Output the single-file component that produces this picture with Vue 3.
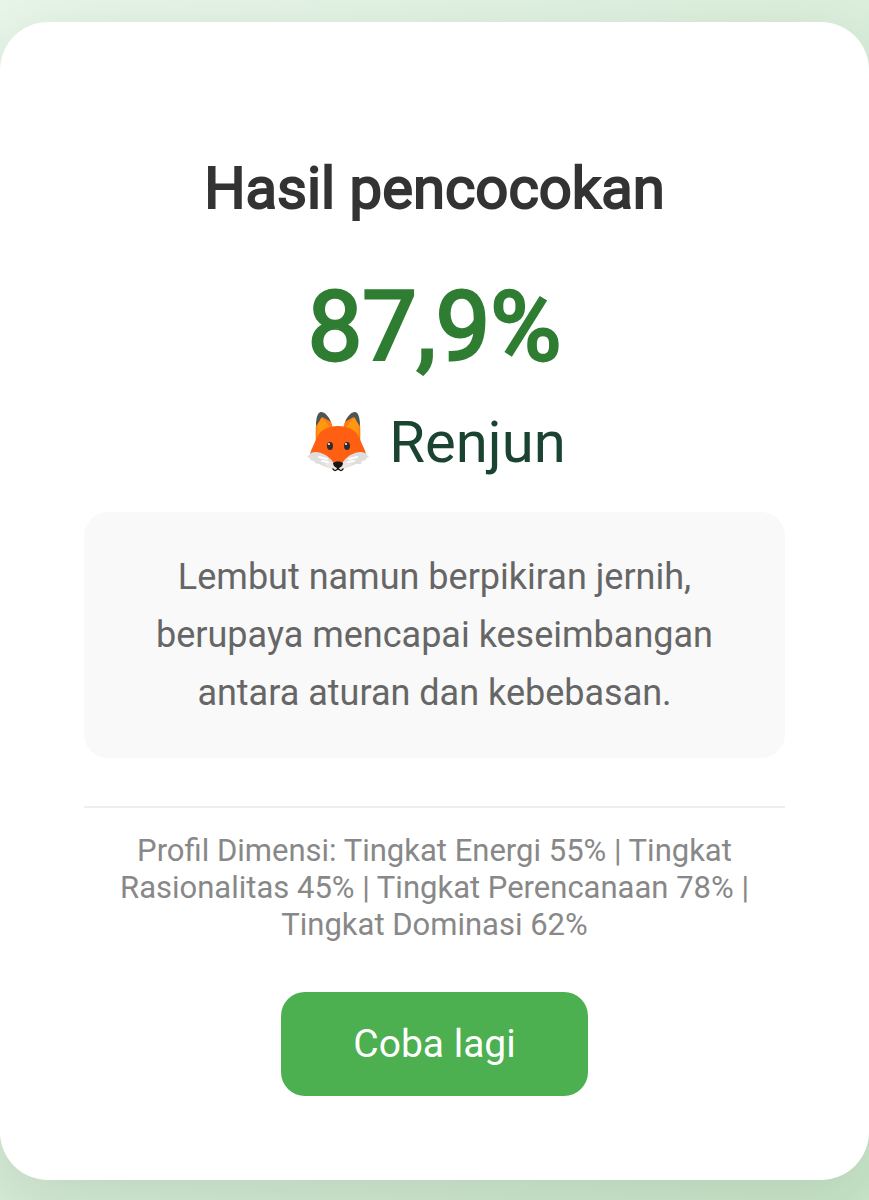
<script setup>
import { ref } from 'vue'

const result = ref({
  score: '87,9%',
  name: 'Renjun',
  description: 'Lembut namun berpikiran jernih, berupaya mencapai keseimbangan antara aturan dan kebebasan.',
})

const dimensions = [
  { label: 'Tingkat Energi', value: 55 },
  { label: 'Tingkat Rasionalitas', value: 45 },
  { label: 'Tingkat Perencanaan', value: 78 },
  { label: 'Tingkat Dominasi', value: 62 },
]

const profile = dimensions.map((d) => `${d.label} ${d.value}%`).join(' | ')
</script>

<template>
  <main class="page">
    <section class="card">
      <h1 class="title">Hasil pencocokan</h1>
      <p class="score">{{ result.score }}</p>
      <p class="name">
        <svg class="fox" viewBox="-3 0 72 62" role="img" aria-label="Rubah">
          <path d="M10 30C9 19 10 4 15 2C20 1 26 10 27 18L22 28Z" fill="#ff7a12" />
          <path d="M54 30C55 19 54 4 49 2C44 1 38 10 37 18L42 28Z" fill="#ff7a12" />
          <path d="M11 27C11 16 12 8 15 6C19 9 24 15 25 19L14 27Z" fill="#ff9710" />
          <path d="M53 27C53 16 52 8 49 6C45 9 40 15 39 19L50 27Z" fill="#ff9710" />
          <path d="M10 15C10 6 12 1 15 1C19 1 23 6 25 11C22 9 19 7 16 6C14 8 13 12 10 15Z" fill="#4c5557" />
          <path d="M54 15C54 6 52 1 49 1C45 1 41 6 39 11C42 9 45 7 48 6C50 8 51 12 54 15Z" fill="#4c5557" />
          <path d="M32 15C21 15 13 20 10 28C8 34 5 38 4 43L22 50L32 55L42 50L60 43C59 38 56 34 54 28C51 20 43 15 32 15Z" fill="#ff5f12" />
          <path d="M1 46L5 42C12 39 22 44 27 51L32 53L37 51C42 44 52 39 59 42L63 46L60 47L60 49L56 50L55 53L50 53C45 55 40 57 36 58L28 58C22 57 17 55 13 53L9 52L8 50L4 49L4 47Z" fill="#dedede" />
          <path d="M18 53C24 49 26 50 30 55L32 56L34 55C38 50 40 49 46 53C42 56 38 57 35 58L29 58C25 57 21 56 18 53Z" fill="#eee6df" />
          <path d="M13 46L21 48M16 50L22 51M51 46L43 48M48 50L42 51" fill="none" stroke="#fff" stroke-width="2" stroke-linecap="round" />
          <ellipse cx="24" cy="35" rx="3" ry="4" fill="#2e2c2c" />
          <ellipse cx="41" cy="35" rx="3" ry="4" fill="#2e2c2c" />
          <circle cx="23" cy="33" r="1" fill="#fff" />
          <circle cx="40" cy="33" r="1" fill="#fff" />
          <path d="M27 52C29 50 35 50 37 52C37 55 34 57 32 57C30 57 27 55 27 52Z" fill="#171615" />
          <path d="M27 58C28 60 31 60 32 57C33 60 36 60 37 58" fill="none" stroke="#171615" stroke-width="1.5" stroke-linecap="round" />
        </svg>
        <span>{{ result.name }}</span>
      </p>
      <p class="description">{{ result.description }}</p>
      <p class="profile">Profil Dimensi: {{ profile }}</p>
      <button class="retry" type="button">Coba lagi</button>
    </section>
  </main>
</template>

<style>
body {
  margin: 0;
}
</style>

<style scoped>
.page {
  box-sizing: border-box;
  min-height: 100vh;
  display: flex;
  flex-direction: column;
  justify-content: center;
  padding: 22px 0 20px;
  overflow: hidden;
  background: linear-gradient(135deg, #e8f5e9, #c8e6c9);
  font-family: Roboto, "Liberation Sans", sans-serif;
  text-align: center;
}

.card {
  display: flex;
  flex-direction: column;
  align-items: center;
  padding: 132px 84px 84px;
  border-radius: 48px;
  background: #fff;
  box-shadow: 0 20px 72px rgba(0, 0, 0, 0.1);
}

.title,
.score,
.name,
.description,
.profile {
  margin: 0;
}

.title {
  color: #333;
  font-size: 58px;
  font-weight: 400;
  line-height: 68px;
  -webkit-text-stroke: 2px #333;
}

.score {
  margin-top: 48px;
  color: #2e7d32;
  font-size: 97px;
  font-weight: 400;
  line-height: 114px;
  -webkit-text-stroke: 3px #2e7d32;
}

.name {
  display: flex;
  align-items: center;
  justify-content: center;
  gap: 14px;
  margin-top: 24px;
  color: #1b4332;
  font-size: 58px;
  line-height: 68px;
}

.fox {
  width: 72px;
  height: 62px;
}

.description {
  box-sizing: border-box;
  width: 100%;
  margin-top: 36px;
  padding: 36px;
  border-radius: 24px;
  background: #f9f9f9;
  color: #666;
  font-size: 36px;
  line-height: 58px;
}

.profile {
  box-sizing: border-box;
  width: 100%;
  margin-top: 48px;
  padding-top: 24px;
  border-top: 2px solid #eee;
  color: #888;
  font-size: 31px;
  line-height: 37px;
}

.retry {
  margin-top: 49px;
  padding: 29px 72px;
  border: 0;
  border-radius: 24px;
  background: #4caf50;
  color: #fff;
  font-family: inherit;
  font-size: 39px;
  line-height: 46px;
  cursor: pointer;
}
</style>
